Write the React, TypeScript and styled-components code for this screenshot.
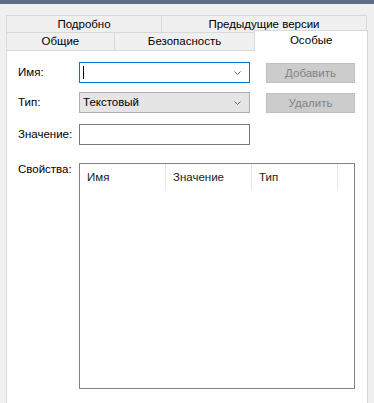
import React from 'react';
import styled, { createGlobalStyle } from 'styled-components';

const GlobalStyle = createGlobalStyle`
	html, body {
		margin: 0;
		padding: 0;
		background: #f0f0f0;
	}
	body {
		font-family: 'Liberation Sans', 'Segoe UI', sans-serif;
		font-size: 11.5px;
		color: #000;
	}
`;

const tabsTop = [
	{ label: 'Подробно', width: 156 },
	{ label: 'Предыдущие версии', width: 206 },
];

const tabsBottom = [
	{ label: 'Общие', width: 109 },
	{ label: 'Безопасность', width: 142 },
	{ label: 'Особые', width: 114, active: true },
];

const columns = ['Имя', 'Значение', 'Тип'];

const Chevron = () => (
	<svg width='7' height='4' viewBox='0 0 7 4'>
		<polyline points='0.5,0.5 3.5,3.5 6.5,0.5' fill='none' stroke='#606060' strokeWidth='1' />
	</svg>
);

const App = () => {
	return (
		<>
			<GlobalStyle />
			<Window>
				<TitleEdge />
				<Content>
					<TabRow>
						{tabsTop.map((t) => (
							<Tab key={t.label} $width={t.width}>
								{t.label}
							</Tab>
						))}
					</TabRow>
					<TabRow $second>
						{tabsBottom.map((t) => (
							<Tab key={t.label} $width={t.width} $active={t.active}>
								{t.label}
							</Tab>
						))}
					</TabRow>
					<Panel>
						<FieldRow $gap={9}>
							<Label>Имя:</Label>
							<Combo $focused>
								<Caret />
								<Chevron />
							</Combo>
							<Button disabled>Добавить</Button>
						</FieldRow>
						<FieldRow $gap={11}>
							<Label>Тип:</Label>
							<Combo $readonly>
								<span>Текстовый</span>
								<Chevron />
							</Combo>
							<Button disabled>Удалить</Button>
						</FieldRow>
						<FieldRow $gap={18}>
							<Label>Значение:</Label>
							<TextBox />
						</FieldRow>
						<ListRow>
							<Label $top>Свойства:</Label>
							<ListView>
								<ListHeader>
									{columns.map((c) => (
										<HeaderCell key={c}>{c}</HeaderCell>
									))}
								</ListHeader>
							</ListView>
						</ListRow>
					</Panel>
				</Content>
			</Window>
		</>
	);
};

const Window = styled.div`
	width: 374px;
	height: 403px;
	overflow: hidden;
	display: flex;
	flex-direction: column;
`;

const TitleEdge = styled.div`
	height: 4px;
	flex-shrink: 0;
	background: #5e6d84;
`;

const Content = styled.div`
	display: flex;
	flex-direction: column;
	padding: 11px 6px 0 6px;
`;

const TabRow = styled.div<{ $second?: boolean }>`
	display: flex;
	align-items: flex-start;
	height: ${(p) => (p.$second ? 18 : 17)}px;
	flex-shrink: 0;
`;

const Tab = styled.div<{ $width: number; $active?: boolean }>`
	box-sizing: border-box;
	width: ${(p) => p.$width}px;
	height: ${(p) => (p.$active ? 21 : 18)}px;
	margin-top: ${(p) => (p.$active ? -2 : 0)}px;
	border: 1px solid #d9d9d9;
	border-bottom: none;
	background: ${(p) => (p.$active ? '#ffffff' : '#f0f0f0')};
	position: ${(p) => (p.$active ? 'relative' : 'static')};
	z-index: ${(p) => (p.$active ? 1 : 'auto')};
	display: flex;
	justify-content: center;
	align-items: ${(p) => (p.$active ? 'flex-start' : 'center')};
	padding-top: ${(p) => (p.$active ? 2 : 0)}px;
	line-height: 15px;
	white-space: nowrap;

	& + & {
		margin-left: -1px;
	}
`;

const Panel = styled.div`
	height: 380px;
	flex-shrink: 0;
	background: #fff;
	border: 1px solid #d9d9d9;
	padding: 11px 12px 0 11px;
	display: flex;
	flex-direction: column;
`;

const FieldRow = styled.div<{ $gap: number }>`
	display: flex;
	align-items: center;
	height: 21px;
	margin-bottom: ${(p) => p.$gap}px;
`;

const Label = styled.div<{ $top?: boolean }>`
	width: 61px;
	flex-shrink: 0;
	line-height: 15px;
	margin-top: ${(p) => (p.$top ? -1 : 0)}px;
`;

const Combo = styled.div<{ $focused?: boolean; $readonly?: boolean }>`
	box-sizing: border-box;
	width: 171px;
	height: 21px;
	border: 1px solid ${(p) => (p.$focused ? '#0078d7' : p.$readonly ? '#adadad' : '#7a7a7a')};
	background: ${(p) => (p.$readonly ? '#e5e5e5' : '#ffffff')};
	display: flex;
	align-items: center;
	justify-content: space-between;
	padding: 0 8px 0 3px;

	span {
		line-height: 15px;
	}
`;

const Caret = styled.div`
	width: 1px;
	height: 13px;
	background: #000;
`;

const TextBox = styled.div`
	box-sizing: border-box;
	width: 171px;
	height: 21px;
	border: 1px solid #7a7a7a;
	background: #fff;
`;

const Button = styled.button`
	box-sizing: border-box;
	width: 89px;
	height: 20px;
	margin-left: 16px;
	align-self: flex-start;
	margin-top: 1px;
	border: 1px solid #bfbfbf;
	background: #cccccc;
	color: #838383;
	font-family: inherit;
	font-size: inherit;
	line-height: 15px;
	padding: 0;
`;

const ListRow = styled.div`
	display: flex;
	align-items: flex-start;
`;

const ListView = styled.div`
	box-sizing: border-box;
	width: 277px;
	height: 226px;
	border: 1px solid #828282;
	background: #fff;
`;

const ListHeader = styled.div`
	display: flex;
	height: 26px;
`;

const HeaderCell = styled.div`
	box-sizing: border-box;
	width: 86px;
	border-right: 1px solid #e5e5e5;
	padding-left: 7px;
	display: flex;
	align-items: center;
	line-height: 15px;
	color: #1a1a1a;
`;

export default App;
